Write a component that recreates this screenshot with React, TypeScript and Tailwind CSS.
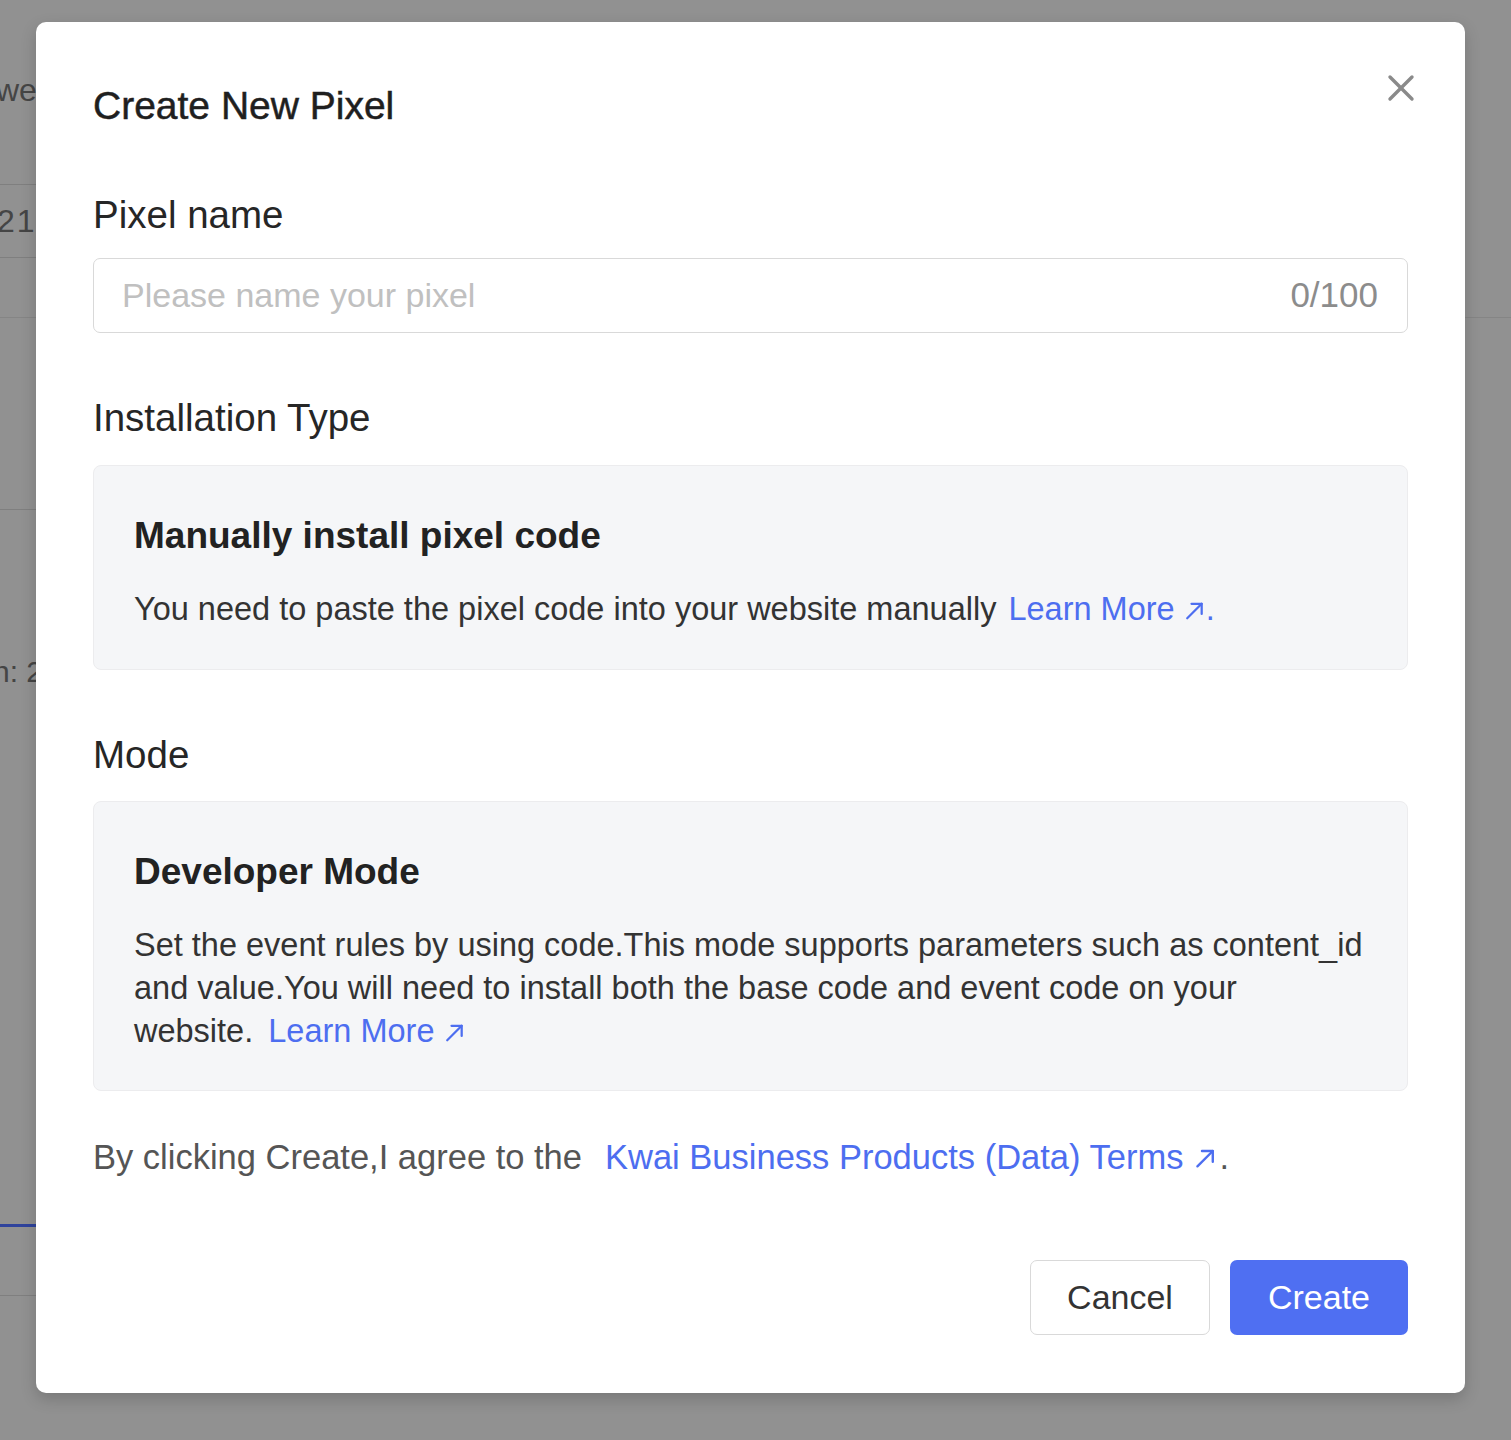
import React from "react";

const ArrowUpRight = () => (
  <svg
    viewBox="0 0 20 20"
    className="ml-[0.3em] inline-block h-[0.66em] w-[0.66em] align-[-0.03em]"
    fill="none"
    stroke="currentColor"
    strokeWidth={2.1}
    strokeLinecap="round"
    strokeLinejoin="round"
  >
    <path d="M3 17 L16.5 3.5" />
    <path d="M7 3.5 H16.5 V13" />
  </svg>
);

const CloseIcon = () => (
  <svg viewBox="0 0 28 28" className="h-[28px] w-[28px]" fill="none" stroke="currentColor" strokeWidth={3.4} strokeLinecap="round">
    <path d="M3 3 L25 25" />
    <path d="M25 3 L3 25" />
  </svg>
);

export default function App() {
  return (
    <div className="relative h-[1440px] w-[1511px] overflow-hidden bg-[#919191] font-['Liberation_Sans',Arial,sans-serif]">
      {/* page behind the overlay */}
      <div className="flex flex-col text-[32px] text-[#454545]">
        <div className="h-[185px] w-[700px] border-b border-[#7f7f7f] pt-[68px] leading-[44px]">
          <span className="-ml-[4px]">we</span>
        </div>
        <div className="flex h-[73px] w-[700px] items-center border-b border-[#7f7f7f] tracking-[2px]">
          <span className="-ml-[3px]">21</span>
        </div>
        <div className="h-[60px] w-full border-b border-[#858585]" />
        <div className="h-[192px] w-[700px] border-b border-[#7f7f7f]" />
        <div className="mt-[140px] h-[44px] text-[30px] leading-[44px]">
          <span className="-ml-[7px]">n:&nbsp;2</span>
        </div>
        <div className="mt-[530px] h-[3px] w-[600px] bg-[#2f439c]" />
        <div className="mt-[68px] h-px w-[700px] bg-[#7f7f7f]" />
      </div>

      {/* modal */}
      <div className="absolute left-[36px] top-[22px] w-[1429px] rounded-[10px] bg-white px-[57px] pb-[58px] pt-[61px] shadow-[0_6px_16px_rgba(0,0,0,0.18)]">
        <button className="absolute right-[50px] top-[52px] text-[#8a8a8a]">
          <CloseIcon />
        </button>

        <h2 className="text-[39px] leading-[46px] text-[#1f1f1f] [-webkit-text-stroke:0.5px_#1f1f1f]">Create New Pixel</h2>

        <div className="mt-[64px] text-[38.5px] leading-[44px] text-[#262626]">Pixel name</div>
        <div className="mt-[21px] flex h-[75px] items-center rounded-[7px] border border-[#d9d9d9] pl-[28px] pr-[29px]">
          <input
            className="flex-1 bg-transparent text-[34px] text-[#262626] outline-none placeholder:text-[#c0c0c0]"
            placeholder="Please name your pixel"
          />
          <span className="text-[35px] text-[#8c8c8c]">0/100</span>
        </div>

        <div className="mt-[63px] text-[38.5px] leading-[44px] text-[#262626]">Installation Type</div>
        <div className="mt-[25px] rounded-[8px] border border-[#ececee] bg-[#f5f6f8] pb-[38px] pl-[40px] pr-[20px] pt-[48px]">
          <div className="text-[37px] font-bold leading-[44px] text-[#222]">Manually install pixel code</div>
          <p className="mt-[30px] text-[32.5px] leading-[43px] text-[#333]">
            You need to paste the pixel code into your website manually{" "}
            <a className="ml-[3px] text-[#4d6ef0]">
              Learn More
              <ArrowUpRight />.
            </a>
          </p>
        </div>

        <div className="mt-[63px] text-[38.5px] leading-[44px] text-[#262626]">Mode</div>
        <div className="mt-[24px] rounded-[8px] border border-[#ececee] bg-[#f5f6f8] pb-[37px] pl-[40px] pr-[20px] pt-[48px]">
          <div className="text-[37px] font-bold leading-[44px] text-[#222]">Developer Mode</div>
          <p className="mt-[30px] text-[32.5px] leading-[43px] text-[#333]">
            Set the event rules by using code.This mode supports parameters such as content_id
            <br />
            and value.You will need to install both the base code and event code on your
            <br />
            website.{" "}
            <a className="ml-[6px] text-[#4d6ef0]">
              Learn More
              <ArrowUpRight />
            </a>
          </p>
        </div>

        <p className="mt-[44px] text-[34.5px] leading-[44px] text-[#555]">
          By clicking Create,I agree to the
          <a className="ml-[23px] text-[#4d6ef0]">
            Kwai Business Products (Data) Terms
            <ArrowUpRight />
          </a>
          <span className="ml-[3px]">.</span>
        </p>

        <div className="mt-[81px] flex justify-end gap-[20px]">
          <button className="h-[75px] w-[180px] rounded-[7px] border border-[#d9d9d9] bg-white text-[34px] text-[#333]">
            Cancel
          </button>
          <button className="h-[75px] w-[178px] rounded-[7px] bg-[#4f6ff2] text-[34px] text-white">
            Create
          </button>
        </div>
      </div>
    </div>
  );
}
